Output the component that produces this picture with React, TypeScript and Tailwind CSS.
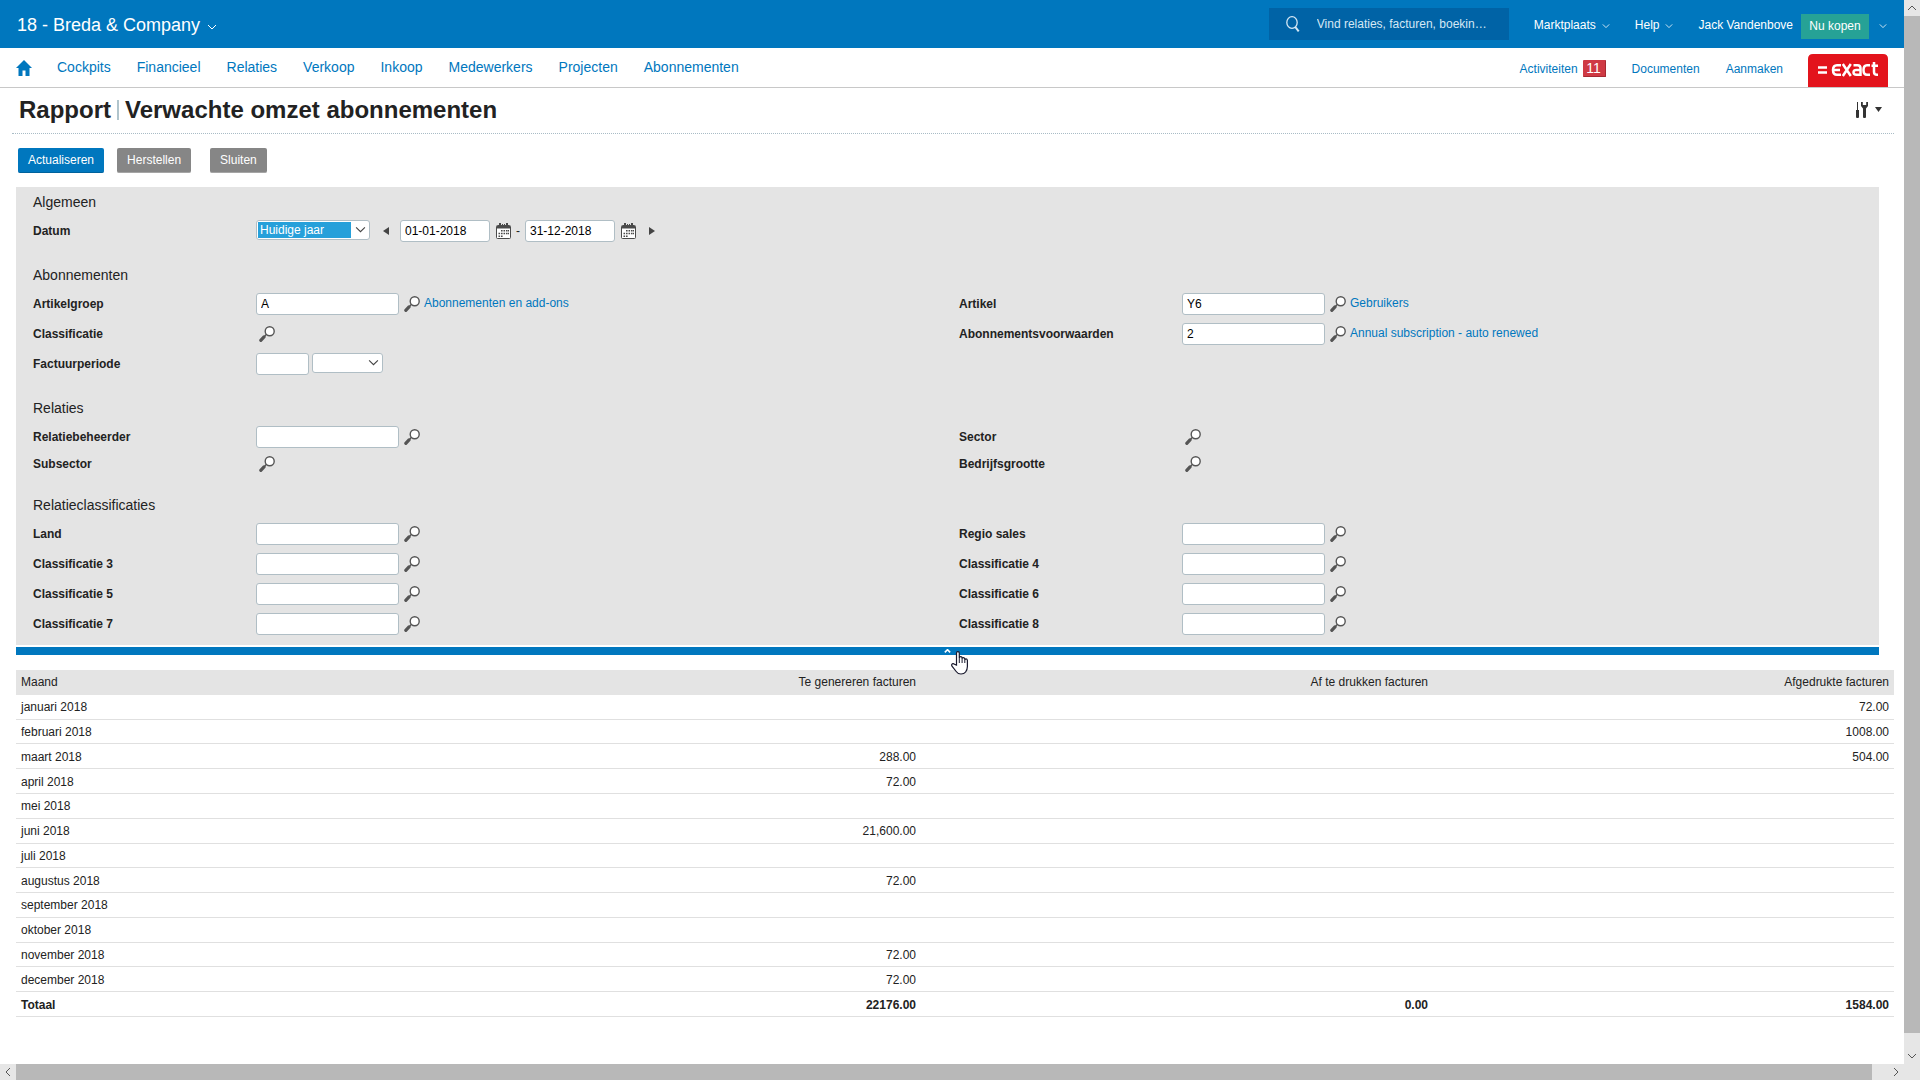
import type { ReactNode } from "react";

const menuItems = ["Cockpits", "Financieel", "Relaties", "Verkoop", "Inkoop", "Medewerkers", "Projecten", "Abonnementen"];

const months = [
    { name: "januari 2018", generate: "", print: "", printed: "72.00" },
    { name: "februari 2018", generate: "", print: "", printed: "1008.00" },
    { name: "maart 2018", generate: "288.00", print: "", printed: "504.00" },
    { name: "april 2018", generate: "72.00", print: "", printed: "" },
    { name: "mei 2018", generate: "", print: "", printed: "" },
    { name: "juni 2018", generate: "21,600.00", print: "", printed: "" },
    { name: "juli 2018", generate: "", print: "", printed: "" },
    { name: "augustus 2018", generate: "72.00", print: "", printed: "" },
    { name: "september 2018", generate: "", print: "", printed: "" },
    { name: "oktober 2018", generate: "", print: "", printed: "" },
    { name: "november 2018", generate: "72.00", print: "", printed: "" },
    { name: "december 2018", generate: "72.00", print: "", printed: "" },
];

const Chevron = ({ className = "", strokeWidth = 1 }: { className?: string; strokeWidth?: number }) => (
    <svg viewBox="0 0 10 6" className={className} fill="none" stroke="currentColor" strokeWidth={strokeWidth} aria-hidden="true">
        <path d="M1 1l4 4 4-4" />
    </svg>
);

const CalendarIcon = () => (
    <svg viewBox="0 0 16 16" className="h-4 w-4" aria-hidden="true">
        <rect x="0.5" y="2.5" width="14" height="13" rx="1" fill="#fff" stroke="#4a4a4a" />
        <path d="M1 3h13v2.500H1z" fill="#4a4a4a" />
        <path d="M3 0h2v4H3zM10 0h2v4h-2z" fill="#4a4a4a" />
        <path d="M6 1h1v2H6zM8 1h1v2H8z" fill="#4a4a4a" />
        <path
            d="M5 7h1.600v1.600H5zM7.500 7h1.600v1.600H7.500zM10 7h1.600v1.600H10zM2.500 9.700h1.600v1.600H2.500zM5 9.700h1.600v1.600H5zM7.500 9.700h1.600v1.600H7.500zM10 9.700h1.600v1.600H10zM2.500 12.400h1.600V14H2.500zM5 12.400h1.600V14H5zM12 7h1v1.600h-1zM12 9.700h1v1.600h-1z"
            fill="#4a4a4a"
        />
    </svg>
);

const LookupButton = ({ label }: { label: string }) => (
    <button type="button" aria-label={`Zoek ${label}`} className="h-4 w-4 shrink-0">
        <svg viewBox="0 0 16 16" className="h-4 w-4" aria-hidden="true">
            <path d="M1.800 14.300l3.200-3.400" stroke="#555" strokeWidth="3.200" strokeLinecap="round" />
            <path d="M5.400 10.400l1.800-1.800" stroke="#555" strokeWidth="1.400" />
            <circle cx="10.700" cy="5.200" r="4.500" fill="#fff" stroke="#555" strokeWidth="1.400" />
        </svg>
    </button>
);

const inputClass = "my-1 h-[22px] rounded-[3px] border border-[#b0bec5] bg-white px-1 text-xs text-black outline-none";

interface SectionProps {
    title: string;
    children: ReactNode;
}

const Section = ({ title, children }: SectionProps) => (
    <section className="mb-3.5 last:mb-0">
        <h2 className="pt-0.5 text-sm leading-[27px]">{title}</h2>
        <div className="grid grid-cols-2 gap-x-1.5">{children}</div>
    </section>
);

interface FieldProps {
    id: string;
    label: string;
    children: ReactNode;
}

const Field = ({ id, label, children }: FieldProps) => (
    <div className="flex min-h-6 items-center">
        <label htmlFor={id} className="w-[223px] shrink-0 font-bold">{label}</label>
        {children}
    </div>
);

interface LookupFieldProps {
    id: string;
    label: string;
    value?: string;
    link?: string;
}

const LookupField = ({ id, label, value = "", link }: LookupFieldProps) => (
    <Field id={id} label={label}>
        <input id={id} type="text" defaultValue={value} className={`${inputClass} mr-[5px] w-[143px]`} />
        <LookupButton label={label} />
        {link && <a href="#" className="ml-1 pb-0.5 text-[#0077be]">{link}</a>}
    </Field>
);

const LookupOnly = ({ label }: { label: string }) => (
    <div className="flex min-h-6 items-center">
        <span className="w-[226px] shrink-0 font-bold">{label}</span>
        <LookupButton label={label} />
    </div>
);

const TopBar = () => (
    <header className="flex h-12 items-center bg-[#0077be] text-white">
        <button type="button" className="ml-[17px] flex items-center gap-[7px] pt-0.5 text-lg leading-6">
            18 - Breda &amp; Company
            <Chevron className="mt-1 h-1.5 w-2.5" />
        </button>
        <label className="ml-auto flex h-8 w-60 items-center bg-[#0063a6] pl-4">
            <svg viewBox="0 0 16 16" className="h-4 w-4 shrink-0" fill="none" stroke="#d5e8f5" aria-hidden="true">
                <ellipse cx="7" cy="6.500" rx="5.200" ry="5.800" strokeWidth="1.300" />
                <path d="M10.300 11l3.400 4.400" strokeWidth="2" />
            </svg>
            <input
                type="search"
                aria-label="Zoeken"
                placeholder="Vind relaties, facturen, boekin…"
                className="ml-4 w-48 bg-transparent text-xs outline-none placeholder:text-[#d5e8f5]"
            />
        </label>
        <button type="button" className="ml-[25px] flex items-center gap-1.5 pt-0.5">
            Marktplaats
            <Chevron className="mt-0.5 h-1.5 w-2" />
        </button>
        <button type="button" className="ml-[25px] flex items-center gap-1.5 pt-0.5">
            Help
            <Chevron className="mt-0.5 h-1.5 w-2" />
        </button>
        <a href="#" className="ml-[25px] pt-0.5">Jack Vandenbove</a>
        <button type="button" className="mt-1 ml-2 h-[25px] w-[68px] bg-[#26a296]">Nu kopen</button>
        <button type="button" aria-label="Meer" className="mr-[17px] ml-2.5 pt-0.5">
            <Chevron className="mt-0.5 h-1.5 w-2" />
        </button>
    </header>
);

const MenuBar = () => (
    <nav className="flex h-10 items-center border-b border-[#c8c8c8] text-[#0077be]">
        <a href="#" aria-label="Home" className="ml-4">
            <svg viewBox="0 0 16 16" className="h-4 w-4" fill="currentColor" aria-hidden="true">
                <path d="M8 0L0 8h2.500v8h4v-5.500h3V16h4V8H16z" />
            </svg>
        </a>
        <div className="ml-[25px] flex gap-[26px] pb-0.5 text-sm">
            {menuItems.map((item) => (
                <a key={item} href="#">{item}</a>
            ))}
        </div>
        <div className="ml-auto flex items-center gap-[26px] pt-0.5">
            <a href="#" className="flex items-center gap-[5px]">
                Activiteiten
                <span className="flex h-[17px] w-[23px] items-center justify-center rounded-[1px] border-r border-b border-[#a52a32] bg-[#cf3a44] text-sm text-white">11</span>
            </a>
            <a href="#">Documenten</a>
            <a href="#">Aanmaken</a>
        </div>
        {/* Exact logo */}
        <a href="#" aria-label="Exact" className="mr-4 ml-[25px] h-[33px] self-end">
            <svg viewBox="0 0 80 33" className="h-[33px] w-20" aria-hidden="true">
                <path d="M0 33V5q0-5 5-5h70q5 0 5 5v28z" fill="#e3141c" />
                <g fill="none" stroke="#fff" strokeWidth="2.500">
                    <path d="M10 13.500h9M10 18.500h9" />
                    <path d="M33 11.200h-4q-4 0-4 4.800t4 4.800h4M25 16h7" />
                    <path d="M34.800 10l8 12M42.800 10l-8 12" />
                    <path d="M45.500 11.200h4q3 0 3 3v6.600h-4q-3 0-3-2.500t3-2.400h4" />
                    <path d="M62 11.200h-3q-3.500 0-3.500 4.800t3.500 4.800h3" />
                    <path d="M66 8v10q0 2.800 3 2.800h1M63.500 11.700h6.500" />
                </g>
            </svg>
        </a>
    </nav>
);

const FilterPanel = () => (
    <form className="mr-[25px] ml-4">
        <div className="bg-[#e4e4e4] pb-1.5 pl-[17px]">
            <Section title="Algemeen">
                <Field id="datum" label="Datum">
                    <div className="relative h-[22px] w-[114px]">
                        <select id="datum" className="block h-5 w-full appearance-none rounded-[3px] border border-[#b0bec5] bg-white bg-[linear-gradient(#26a0da,#26a0da)] bg-size-[93px_16px] bg-position-[1px_1px] bg-no-repeat px-[3px] text-xs leading-4 text-white outline-none">
                            <option>Huidige jaar</option>
                        </select>
                        <Chevron className="pointer-events-none absolute top-1.5 right-1 h-[7px] w-[11px] text-[#444]" />
                    </div>
                    <button type="button" aria-label="Vorige periode" className="mr-[11px] ml-[13px]">
                        <svg viewBox="0 0 6 8" className="h-2 w-1.5" aria-hidden="true">
                            <path d="M6 0v8L0 4z" fill="#444" />
                        </svg>
                    </button>
                    <input type="text" aria-label="Datum van" defaultValue="01-01-2018" className={`${inputClass} mr-1.5 w-[90px]`} />
                    <button type="button" aria-label="Kies begindatum"><CalendarIcon /></button>
                    <span className="mx-1 w-[5px]">-</span>
                    <input type="text" aria-label="Datum tot" defaultValue="31-12-2018" className={`${inputClass} mr-1.5 w-[90px]`} />
                    <button type="button" aria-label="Kies einddatum"><CalendarIcon /></button>
                    <button type="button" aria-label="Volgende periode" className="ml-3">
                        <svg viewBox="0 0 6 8" className="h-2 w-1.5" aria-hidden="true">
                            <path d="M0 0v8l6-4z" fill="#444" />
                        </svg>
                    </button>
                </Field>
            </Section>
            <Section title="Abonnementen">
                <LookupField id="artikelgroep" label="Artikelgroep" value="A" link="Abonnementen en add-ons" />
                <LookupField id="artikel" label="Artikel" value="Y6" link="Gebruikers" />
                <LookupOnly label="Classificatie" />
                <LookupField id="voorwaarden" label="Abonnementsvoorwaarden" value="2" link="Annual subscription - auto renewed" />
                <Field id="factuurperiode" label="Factuurperiode">
                    <input id="factuurperiode" type="text" className={`${inputClass} mr-[3px] w-[53px]`} />
                    <div className="relative h-[22px] w-[71px]">
                        <select aria-label="Eenheid factuurperiode" className="block h-5 w-full appearance-none rounded-[3px] border border-[#b0bec5] bg-white px-1 text-xs outline-none">
                            <option></option>
                        </select>
                        <Chevron className="pointer-events-none absolute top-1.5 right-1 h-[7px] w-[11px] text-[#444]" />
                    </div>
                </Field>
            </Section>
            <Section title="Relaties">
                <LookupField id="relatiebeheerder" label="Relatiebeheerder" />
                <LookupOnly label="Sector" />
                <LookupOnly label="Subsector" />
                <LookupOnly label="Bedrijfsgrootte" />
            </Section>
            <Section title="Relatieclassificaties">
                <LookupField id="land" label="Land" />
                <LookupField id="regio" label="Regio sales" />
                <LookupField id="classificatie3" label="Classificatie 3" />
                <LookupField id="classificatie4" label="Classificatie 4" />
                <LookupField id="classificatie5" label="Classificatie 5" />
                <LookupField id="classificatie6" label="Classificatie 6" />
                <LookupField id="classificatie7" label="Classificatie 7" />
                <LookupField id="classificatie8" label="Classificatie 8" />
            </Section>
        </div>
        {/* Collapse bar */}
        <button type="button" aria-label="Criteria verbergen" className="relative mt-0.5 flex h-2 w-full justify-center bg-[#0077be] text-white">
            <Chevron className="mt-0.5 h-1 w-[7px] rotate-180" strokeWidth={2.4} />
            <svg viewBox="0 0 18 24" className="absolute top-1 left-1/2 z-10 ml-[3px] h-6 w-[18px]" aria-hidden="true">
                <path
                    d="M5.500 14V2.200q0-1.500 1.400-1.500t1.400 1.500V7q0-1.300 1.400-1.300T11.100 7v.7q.2-1 1.300-1t1.400 1.300v.7q.3-.8 1.300-.8t1.300 1.400V15.500q0 3-1.800 5.500-1.500 2-4.600 2-3.200 0-4.800-2.500L1 15.200q-.8-1.500.2-2.300 1.200-.6 2.300.3z"
                    fill="#fff"
                    stroke="#1a1a2e"
                    strokeWidth="1.200"
                />
                <path d="M8.300 7v5M11.100 7.500V12M13.800 8.500V12" stroke="#1a1a2e" />
            </svg>
        </button>
    </form>
);

const ReportTable = () => (
    <table className="mt-[15px] mr-2.5 ml-4 h-[347px] w-[calc(100%-26px)] table-fixed border-collapse">
        <thead>
            <tr className="h-[25px] bg-[#e4e4e4]">
                <th className="w-[24%] px-[5px] pb-0.5 text-left font-normal">Maand</th>
                <th className="px-[5px] pb-0.5 text-right font-normal">Te genereren facturen</th>
                <th className="w-[512px] px-[5px] pb-0.5 text-right font-normal">Af te drukken facturen</th>
                <th className="w-[461px] px-[5px] pb-0.5 text-right font-normal">Afgedrukte facturen</th>
            </tr>
        </thead>
        <tbody>
            {months.map((month) => (
                <tr key={month.name} className="border-b border-[#e0e0e0]">
                    <td className="px-[5px] pt-px">{month.name}</td>
                    <td className="px-[5px] pt-px text-right">{month.generate}</td>
                    <td className="px-[5px] pt-px text-right">{month.print}</td>
                    <td className="px-[5px] pt-px text-right">{month.printed}</td>
                </tr>
            ))}
            <tr className="border-b border-[#e0e0e0] font-bold">
                <td className="px-[5px] pt-px">Totaal</td>
                <td className="px-[5px] pt-px text-right">22176.00</td>
                <td className="px-[5px] pt-px text-right">0.00</td>
                <td className="px-[5px] pt-px text-right">1584.00</td>
            </tr>
        </tbody>
    </table>
);

const App = () => {
    return (
        <div className="flex h-screen flex-col bg-white font-['Liberation_Sans',Arial,sans-serif] text-xs text-[#222]">
            <div className="flex min-h-0 flex-1">
                <main className="min-w-0 flex-1 overflow-hidden">
                    <TopBar />
                    <MenuBar />
                    <div className="mr-2.5 ml-3 flex h-[46px] items-center border-b border-dotted border-[#a9bcc6] pb-0.5 pl-[7px]">
                        <h1 className="flex items-center text-2xl font-bold">
                            Rapport
                            <span className="mr-1.5 ml-1.5 h-5 w-0.5 bg-[#b0c4cc]" />
                            Verwachte omzet abonnementen
                        </h1>
                        <button type="button" aria-label="Instellingen" className="mr-3 ml-auto flex items-center gap-1.5">
                            <svg viewBox="0 0 13 16" className="h-4 w-[13px]" fill="#333" aria-hidden="true">
                                <path d="M1 0h1v8H1z" />
                                <path d="M0 8h3v7q0 1-1 1H1q-1 0-1-1z" />
                                <path d="M5 0h1.800v3h3.400V0H12v4l-2 2.500V15q0 1-1 1H8q-1 0-1-1V6.500L5 4z" />
                            </svg>
                            <svg viewBox="0 0 7 5" className="h-[5px] w-[7px]" aria-hidden="true">
                                <path d="M0 0h7L3.500 5z" fill="#333" />
                            </svg>
                        </button>
                    </div>
                    <div className="flex px-[18px] pt-3.5 pb-3.5 text-white">
                        <button type="button" className="h-[25px] rounded-xs border-b border-[#00629c] bg-[#0077be] px-2.5">Actualiseren</button>
                        <button type="button" className="ml-[13px] h-[25px] rounded-xs border-b border-[#a5a5a5] bg-[#868686] px-2.5">Herstellen</button>
                        <button type="button" className="ml-[19px] h-[25px] rounded-xs border-b border-[#a5a5a5] bg-[#868686] px-2.5">Sluiten</button>
                    </div>
                    <FilterPanel />
                    <ReportTable />
                </main>
                {/* Vertical scrollbar */}
                <div className="flex w-4 flex-col bg-[#e6e6e6] text-[#555]">
                    <div className="flex h-4 items-center justify-center">
                        <Chevron className="h-1.5 w-2.5 rotate-180" />
                    </div>
                    <div className="flex-1 bg-[#b8b8b8]" />
                    <div className="flex h-[31px] items-end justify-center pb-[5px]">
                        <Chevron className="h-1.5 w-2.5" />
                    </div>
                </div>
            </div>
            {/* Horizontal scrollbar */}
            <div className="flex h-4 bg-[#e6e6e6] pr-4 text-[#555]">
                <div className="flex w-4 items-center justify-center">
                    <Chevron className="h-1.5 w-2.5 rotate-90" />
                </div>
                <div className="flex-1 bg-[#b8b8b8]" />
                <div className="flex w-8 items-center justify-end pr-[3px]">
                    <Chevron className="h-1.5 w-2.5 -rotate-90" />
                </div>
            </div>
        </div>
    );
};

export default App;
